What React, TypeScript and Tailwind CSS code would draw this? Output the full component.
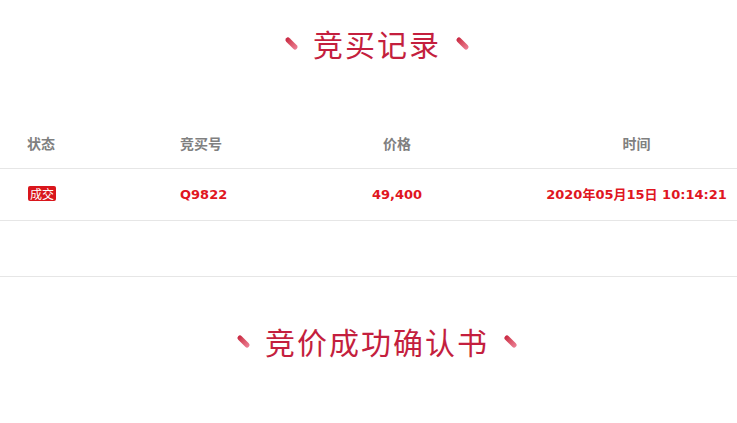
const cjk = "font-['Noto_Sans_CJK_SC',sans-serif]";
const num = "font-['DejaVu_Sans','Noto_Sans_CJK_SC',sans-serif]";

function Dash() {
  return (
    <span className="inline-block h-[5px] w-[15px] rotate-45 rounded-full bg-gradient-to-r from-[#c8213f] to-[#ec7f96]" />
  );
}

function SectionTitle({ text }: { text: string }) {
  return (
    <div className="flex h-[86px] items-center justify-center gap-[14px] pl-[17px]">
      <Dash />
      <h2 className={`${cjk} text-[30px] leading-none tracking-[2px] text-[#c41f3e]`}>
        {text}
      </h2>
      <Dash />
    </div>
  );
}

const cols = "grid grid-cols-[153px_105px_278px_201px] items-center";

export default function App() {
  return (
    <div className="w-[737px] bg-white">
      <SectionTitle text="竞买记录" />

      <div className="mt-[34px]">
        <div
          className={`${cols} h-[49px] border-b border-[#e6e6e6] pb-[2px] ${cjk} text-[14px] font-bold text-[#808080]`}
        >
          <div className="pl-[27px]">状态</div>
          <div className="pl-[27px]">竞买号</div>
          <div className="text-center">价格</div>
          <div className="text-center">时间</div>
        </div>

        <div
          className={`${cols} h-[52px] border-b border-[#e6e6e6] ${num} text-[13px] font-bold text-[#e0161f]`}
        >
          <div className="pl-[28px]">
            <span
              className={`${cjk} inline-flex h-[15px] w-[28px] items-center justify-center rounded-[2px] bg-[#d9161c] text-[12px] font-normal leading-none text-white`}
            >
              成交
            </span>
          </div>
          <div className="pl-[27px]">Q9822</div>
          <div className="text-center">49,400</div>
          <div className="text-center">2020年05月15日 10:14:21</div>
        </div>
      </div>

      <div className="mt-[55px] border-t border-[#e6e6e6]">
        <div className="mt-[21px]">
          <SectionTitle text="竞价成功确认书" />
        </div>
        <div className="h-[39px]" />
      </div>
    </div>
  );
}
